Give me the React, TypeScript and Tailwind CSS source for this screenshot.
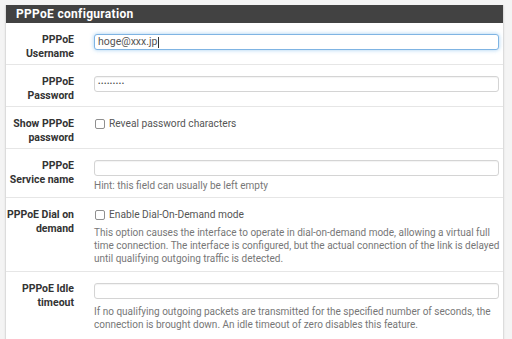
import React from 'react';

const font = { fontFamily: 'Roboto, "Liberation Sans", sans-serif' };

const Label = ({ lines }: { lines: string[] }) => (
  <div className="w-[68px] shrink-0 text-right text-[10.5px] font-bold leading-[14px] text-[#333]">
    {lines.map((l) => (
      <div key={l}>{l}</div>
    ))}
  </div>
);

const TextBox = ({ value, focused, password }: { value?: string; focused?: boolean; password?: boolean }) => (
  <div
    className={
      'mt-[1px] mr-[2px] flex h-[16px] items-center rounded-[3px] border bg-white px-[3px] text-[10.5px] text-[#555] ' +
      (focused
        ? 'border-[#7fb4e3] shadow-[0_0_4px_rgba(102,175,233,0.6)]'
        : 'border-[#d4d4d4] shadow-[inset_0_1px_1px_rgba(0,0,0,0.05)]')
    }
  >
    {password ? (
      <span className="text-[7px] tracking-[0.6px] text-[#444]">•••••••••</span>
    ) : (
      value && (
        <>
          <span>{value}</span>
          {focused && <span className="ml-[1px] inline-block h-[11px] w-px bg-[#333]" />}
        </>
      )
    )}
  </div>
);

const Check = ({ text }: { text: string }) => (
  <div className="flex h-[14px] items-center text-[10.2px] text-[#555]">
    <span className="ml-[1px] mr-[4px] inline-block h-[10px] w-[10px] rounded-[2px] border border-[#8f8f8f] bg-white" />
    <span>{text}</span>
  </div>
);

const Help = ({ children, className = '' }: { children: React.ReactNode; className?: string }) => (
  <div className={'text-[10px] leading-[13px] text-[#777] ' + className}>{children}</div>
);

const Row = ({ label, children, last }: { label: string[]; children: React.ReactNode; last?: boolean }) => (
  <div className={'flex gap-[20px] pt-[10px] pb-[3px] pr-[2px] ' + (last ? '' : 'border-b border-[#e6e6e6]')}>
    <Label lines={label} />
    <div className="min-w-0 flex-1">{children}</div>
  </div>
);

export default function App() {
  return (
    <div className="h-[339px] w-[512px] bg-[#f4f4f4] px-[5px] pt-[5px]" style={font}>
      <div className="w-[499px] border-x border-b border-[#dcdcdc] bg-white shadow-[0_1px_2px_rgba(0,0,0,0.08)]">
        <div className="flex h-[18px] items-center bg-[#424242] px-[10px] text-[12px] font-bold tracking-[0.3px] text-white">
          PPPoE configuration
        </div>

        <Row label={['PPPoE', 'Username']}>
          <TextBox value="hoge@xxx.jp" focused />
        </Row>

        <Row label={['PPPoE', 'Password']}>
          <TextBox password />
        </Row>

        <Row label={['Show PPPoE', 'password']}>
          <Check text="Reveal password characters" />
        </Row>

        <Row label={['PPPoE', 'Service name']}>
          <TextBox />
          <Help className="mt-[3px] pb-[2px]">Hint: this field can usually be left empty</Help>
        </Row>

        <Row label={['PPPoE Dial on', 'demand']}>
          <Check text="Enable Dial-On-Demand mode" />
          <Help className="mt-[4px] pb-[3px]">
            This option causes the interface to operate in dial-on-demand mode, allowing a virtual full time
            connection. The interface is configured, but the actual connection of the link is delayed until
            qualifying outgoing traffic is detected.
          </Help>
        </Row>

        <Row label={['PPPoE Idle', 'timeout']} last>
          <TextBox />
          <Help className="mt-[6px] pb-[5px]">
            If no qualifying outgoing packets are transmitted for the specified number of seconds, the
            connection is brought down. An idle timeout of zero disables this feature.
          </Help>
        </Row>
      </div>
    </div>
  );
}
